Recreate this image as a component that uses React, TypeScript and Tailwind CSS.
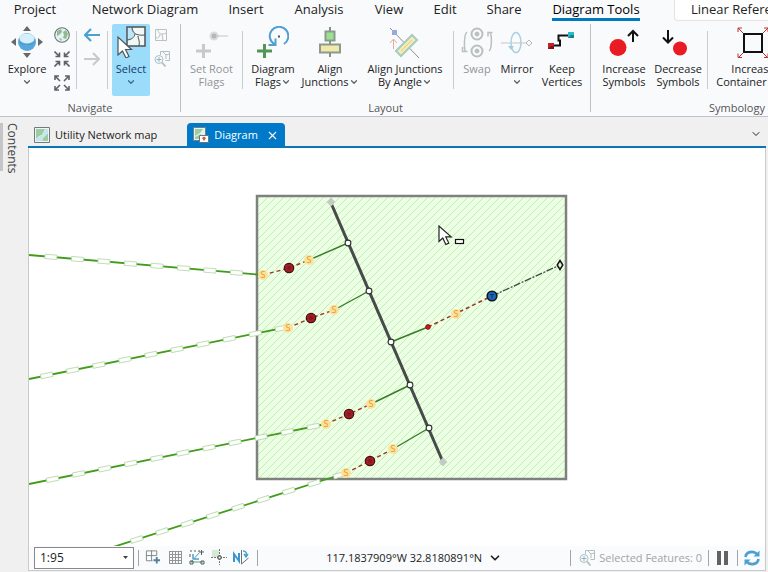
import { ReactNode } from 'react';
import { ChevronDown, X } from 'lucide-react';

const tabs = [
  { label: 'Project', className: 'w-[70px]' },
  { label: 'Network Diagram', className: 'w-[150px]' },
  { label: 'Insert', className: 'w-[52px]' },
  { label: 'Analysis', className: 'w-[94px]' },
  { label: 'View', className: 'w-[46px]' },
  { label: 'Edit', className: 'w-[66px]' },
  { label: 'Share', className: 'w-[52px]' },
];

// Service lines that come in from the left edge of the map
const services = [
  { x1: 0, y1: 107, x2: 234, y2: 127, first: 22 },
  { x1: 0, y1: 231, x2: 259, y2: 179, first: 18 },
  { x1: 0, y1: 336, x2: 297, y2: 276, first: 24 },
  { x1: 81, y1: 400, x2: 317, y2: 325, first: 28 },
];

const laterals = [
  { from: [234, 127], device: [260, 120], to: [280, 112], junction: [319, 95] },
  { from: [259, 180], device: [282, 170], to: [305, 162], junction: [340, 143] },
  { from: [297, 276], device: [320, 266], to: [342, 256], junction: [381, 237] },
  { from: [317, 325], device: [341, 313], to: [364, 301], junction: [400, 280] },
];

export default function App() {
  return (
    <div className="flex min-h-screen flex-col overflow-hidden bg-[#f0f0f0] font-['Open_Sans','Noto_Sans',sans-serif] text-[11px] text-[#222]">
      <Ribbon />
      <div className="flex flex-1">
        <aside className="w-7 shrink-0 pt-1.5">
          <button className="flex h-12 items-center border-l-3 border-[#c4c5c7] pl-px text-xs text-[#444] [writing-mode:vertical-rl]">
            Contents
          </button>
        </aside>
        <main className="mr-0.5 mb-px flex min-w-0 flex-1 flex-col">
          <ViewTabs />
          <div className="flex flex-1 flex-col border border-t-0 border-[#c9cacc] bg-white">
            <div className="flex-1">
              <DiagramMap />
            </div>
            <StatusBar />
          </div>
        </main>
      </div>
    </div>
  );
}

function Ribbon() {
  return (
    <header className="overflow-hidden border-b border-[#c2c3c6] bg-[#f9fafc]">
      <nav className="flex h-[22px] text-[13px] leading-[19px] whitespace-nowrap">
        {tabs.map((tab) => (
          <a key={tab.label} href="#" className={`${tab.className} flex shrink-0 justify-center`}>
            {tab.label}
          </a>
        ))}
        <a href="#" className="ml-[22px] flex h-[21px] w-[88px] shrink-0 justify-center border-b-3 border-[#0079c1] text-black">
          Diagram Tools
        </a>
        <a href="#" className="ml-[34px] h-[21px] shrink-0 rounded-bl border-b border-l border-[#e4e3dc] bg-white pr-8 pl-4">
          Linear Referencing
        </a>
      </nav>
      <div className="flex h-[94px] pt-0.5">
        <Group label="Navigate">
          <Tool className="w-[54px]" lines={['Explore']} menu icon={<ExploreIcon />} />
          <div className="flex w-4 flex-col items-center gap-1.5 pt-[3px]">
            <IconButton label="Full Extent"><GlobeIcon /></IconButton>
            <IconButton label="Fixed Zoom In"><ZoomInIcon /></IconButton>
            <IconButton label="Fixed Zoom Out"><ZoomOutIcon /></IconButton>
          </div>
          <Separator className="mr-[7px] ml-1.5" />
          <div className="flex w-4 flex-col gap-1.5 pt-[3px]">
            <IconButton label="Previous Extent"><ArrowIcon color="#4d9fd3" /></IconButton>
            <IconButton label="Next Extent"><ArrowIcon color="#c9cacb" flip /></IconButton>
          </div>
          <Separator className="mr-1 ml-[7px]" />
          <Tool className="w-[38px] rounded-xs bg-[#9bdcfb] text-[#123c6b]" lines={['Select']} menu icon={<SelectIcon />} />
          <div className="mr-2.5 ml-1 flex w-4 flex-col gap-1.5 pt-[3px]">
            <IconButton label="Attributes"><MapOutlineIcon /></IconButton>
            <IconButton label="Zoom To Selection"><ZoomSelectionIcon /></IconButton>
          </div>
        </Group>
        <GroupLine />
        <Group label="Layout">
          <Tool className="w-[61px]" lines={['Set Root', 'Flags']} disabled icon={<RootFlagIcon />} />
          <Separator />
          <Tool className="w-[60px]" lines={['Diagram', 'Flags']} menu icon={<DiagramFlagsIcon />} />
          <Tool className="w-[54px]" lines={['Align', 'Junctions']} menu icon={<AlignIcon />} />
          <Tool className="w-[96px]" lines={['Align Junctions', 'By Angle']} menu icon={<AlignAngleIcon />} />
          <Separator />
          <Tool className="w-[46px]" lines={['Swap']} disabled icon={<SwapIcon />} />
          <Tool className="w-[34px]" lines={['Mirror']} menu icon={<MirrorIcon />} />
          <Tool className="w-[56px]" lines={['Keep', 'Vertices']} icon={<VerticesIcon />} />
        </Group>
        <GroupLine />
        <Group label="Symbology">
          <Tool className="ml-1 w-[58px]" lines={['Increase', 'Symbols']} icon={<IncreaseIcon />} />
          <Tool className="mr-1 w-[50px]" lines={['Decrease', 'Symbols']} icon={<DecreaseIcon />} />
          <Separator />
          <Tool className="w-[90px]" lines={['Increase', 'Container Size']} icon={<ContainerIcon />} />
          <Tool className="w-[85px]" lines={['Decrease', 'Container Size']} icon={<ContainerIcon />} />
        </Group>
      </div>
    </header>
  );
}

function Group({ label, children }: { label: string; children: ReactNode }) {
  return (
    <section className="shrink-0">
      <div className="flex h-[78px]">{children}</div>
      <h2 className="text-center leading-3 text-[#555]">{label}</h2>
    </section>
  );
}

function GroupLine() {
  return <span className="h-22 w-px shrink-0 bg-[#bfc0c2]" />;
}

function Separator({ className = '' }: { className?: string }) {
  return <span className={`mt-[7px] h-[58px] w-px shrink-0 bg-[#cacbcd] ${className}`} />;
}

interface ToolProps {
  lines: string[];
  icon: ReactNode;
  menu?: boolean;
  disabled?: boolean;
  className?: string;
}

function Tool({ lines, icon, menu, disabled, className = '' }: ToolProps) {
  return (
    <button disabled={disabled} className={`flex h-[72px] shrink-0 flex-col items-center pt-0.5 leading-[13px] whitespace-nowrap disabled:text-[#929497] ${className}`}>
      <span className="mb-1 h-8">{icon}</span>
      <span>{lines[0]}</span>
      <span className="flex h-[13px] items-center">
        {lines[1]}
        {menu && <ChevronDown size={10} strokeWidth={3} className="opacity-70" />}
      </span>
    </button>
  );
}

function IconButton({ label, children }: { label: string; children: ReactNode }) {
  return (
    <button aria-label={label} className="flex h-[18px] w-4 shrink-0">
      {children}
    </button>
  );
}

function ViewTabs() {
  return (
    <div className="flex h-[31px] items-end border-b-2 border-[#0b74b5] pr-1">
      <button className="flex h-[22px] items-center gap-[5px] pr-[30px] pl-1.5">
        <MapIcon />
        Utility Network map
      </button>
      <div className="flex h-[23px] items-center gap-2 rounded-t bg-[#0079c8] px-1.5 pt-px text-white">
        <button className="flex items-center gap-[5px]">
          <DiagramIcon />
          Diagram
        </button>
        <button aria-label="Close Diagram">
          <X size={13} strokeWidth={2} />
        </button>
      </div>
      <button aria-label="Open views" className="mb-1.5 ml-auto">
        <ChevronDown size={12} />
      </button>
    </div>
  );
}

function StatusBar() {
  return (
    <footer className="flex h-6 items-center bg-[#fafbfc] pl-[5px]">
      <div className="relative">
        <select aria-label="Map scale" className="block h-[22px] w-[100px] appearance-none border border-[#88898c] bg-white px-[5px] text-xs">
          <option>1:95</option>
        </select>
        <svg className="pointer-events-none absolute top-2 right-1.5" width="5" height="5" viewBox="0 0 5 5">
          <path d="M0 1h5L2.5 4z" fill="#444" />
        </svg>
      </div>
      <BarLine className="mx-1" />
      <div className="flex items-center gap-1.5 pl-0.5">
        <IconButton label="Constraints"><ConstraintIcon /></IconButton>
        <IconButton label="Grid"><GridIcon /></IconButton>
        <IconButton label="Snapping"><SnapIcon /></IconButton>
        <IconButton label="Infer Constraint"><InferIcon /></IconButton>
        <IconButton label="Ground To Grid"><NorthIcon /></IconButton>
      </div>
      <BarLine className="ml-2" />
      <button className="mx-auto flex items-center gap-1.5 whitespace-nowrap">
        117.1837909°W 32.8180891°N
        <ChevronDown size={14} strokeWidth={3} />
      </button>
      <BarLine className="mr-2" />
      <span className="flex items-center gap-1 whitespace-nowrap text-[#a2a4a7]">
        <ZoomSelectionIcon />
        Selected Features: 0
      </span>
      <BarLine className="mx-1.5" />
      <button aria-label="Pause drawing" className="px-0.5">
        <svg width="12" height="16" viewBox="0 0 12 16">
          <path d="M0 1h4v14H0zM7 1h4v14H7z" fill="#606266" />
        </svg>
      </button>
      <BarLine className="mx-1.5" />
      <button aria-label="Refresh" className="mr-[5px]">
        <svg width="16" height="16" viewBox="0 0 16 16" fill="none" stroke="#4d9fd3" strokeWidth="2.6">
          <path d="M1.500 7C2 2 9 0 13 4M14.500 9C14 14 7 16 3 12" />
          <path d="M15.500 0.500v6H9.500zM0.500 15.500v-6h6z" fill="#4d9fd3" stroke="none" />
        </svg>
      </button>
    </footer>
  );
}

function BarLine({ className = '' }: { className?: string }) {
  return <span className={`h-4 w-px shrink-0 bg-[#a2a4a7] ${className}`} />;
}

function DiagramMap() {
  return (
    <svg viewBox="0 0 736 398" className="block w-full">
      <defs>
        <pattern id="hatch" width="8" height="8" patternUnits="userSpaceOnUse">
          <path d="M-2 2l4-4M0 8l8-8M6 10l4-4" stroke="#c6e3bd" strokeWidth="0.9" />
        </pattern>
      </defs>
      <rect x="228" y="48" width="309" height="283" fill="#ebffe2" />
      <rect x="228" y="48" width="309" height="283" fill="url(#hatch)" stroke="#7f817f" strokeWidth="2.5" />
      {services.map((line) => (
        <ServiceLine key={line.y1} {...line} />
      ))}
      <path d="M302 55l112 259" stroke="#464b49" strokeWidth="3" />
      <path d="M299 54l3-3 3 3-3 3zM411 314l3-3 3 3-3 3z" fill="#c3cbc3" stroke="#c3cbc3" strokeWidth="2" />
      {laterals.map(({ from, device, to, junction }) => (
        <g key={from[1]}>
          <path d={`M${from} L${device} L${to}`} fill="none" stroke="#9b3a20" strokeWidth="1.4" strokeDasharray="4 3" />
          <path d={`M${to} L${junction}`} stroke="#357c22" strokeWidth="1.4" />
          <Switch x={from[0]} y={from[1]} />
          <Switch x={to[0]} y={to[1]} />
          <circle cx={device[0]} cy={device[1]} r="4.7" fill="#a51d22" stroke="#3f1114" strokeWidth="1.2" />
          <circle cx={device[0]} cy={device[1]} r="2" fill="#7f1a1f" />
          <Junction x={junction[0]} y={junction[1]} />
        </g>
      ))}
      <path d="M362 194l37-15" stroke="#357c22" strokeWidth="1.4" />
      <path d="M399 179l64-31" stroke="#9b3a20" strokeWidth="1.6" strokeDasharray="4 3" />
      <path d="M463 148l68-31" stroke="#3d4a40" strokeWidth="1.3" strokeDasharray="7 1.5 2 1.5" />
      <Junction x={362} y={194} />
      <circle cx="399" cy="179" r="2.4" fill="#c8171d" stroke="#7d1215" strokeWidth="0.8" />
      <Switch x={427} y={166} />
      <circle cx="463" cy="148" r="4.8" fill="#1d66bd" stroke="#101820" strokeWidth="1.6" />
      <path d="M461 146.500h4M463 146.500v4" stroke="#123253" />
      <path d="M531 112.500l2.800 4.500-2.800 4.500-2.800-4.500z" fill="#e7f5e0" stroke="#151515" strokeWidth="1.5" />
      <path d="M410 78v15.500l3.800-3.500 3 6.500 3-1.400-3-6.200h5.400z" fill="#fff" stroke="#222" strokeWidth="1.200" />
      <rect x="426.500" y="91.500" width="8" height="4" fill="#fff" stroke="#111" strokeWidth="1.200" />
    </svg>
  );
}

interface ServiceLineProps {
  x1: number;
  y1: number;
  x2: number;
  y2: number;
  first: number;
}

function ServiceLine({ x1, y1, x2, y2, first }: ServiceLineProps) {
  const length = Math.hypot(x2 - x1, y2 - y1);
  const angle = (Math.atan2(y2 - y1, x2 - x1) * 180) / Math.PI;
  const boxes: number[] = [];
  for (let d = first; d < length - 3; d += 26.6) boxes.push(d);

  return (
    <g transform={`translate(${x1} ${y1}) rotate(${angle})`}>
      <path d={`M0 0H${length}`} stroke="#429c1c" strokeWidth="1.8" />
      {boxes.map((d) => (
        <rect key={d} x={d - 6} y="-2.200" width="12" height="4.400" fill="#fdfffc" stroke="#b4d6a8" strokeWidth="0.8" />
      ))}
    </g>
  );
}

function Switch({ x, y }: { x: number; y: number }) {
  return (
    <g>
      <circle cx={x} cy={y} r="5" fill="#fbe29a" />
      <text x={x} y={y + 3} textAnchor="middle" fontSize="9" fill="#e9962f">S</text>
    </g>
  );
}

function Junction({ x, y }: { x: number; y: number }) {
  return <circle cx={x} cy={y} r="2.900" fill="#fff" stroke="#2c332f" strokeWidth="1.100" />;
}

function ExploreIcon() {
  return (
    <svg width="32" height="32" viewBox="0 0 32 32">
      <path d="M12 5l4-5 4 5zM12 27l4 5 4-5zM5 12v8l-5-4zM27 12v8l5-4z" fill="#67696c" />
      <circle cx="16" cy="16" r="9" fill="#58a6da" />
      <ellipse cx="16" cy="12.500" rx="7.500" ry="5" fill="#d6f0fb" />
      <path d="M8 15c3 5 13 5 16 0-1 3-4 4-8 4s-7-1-8-4z" fill="#3d8fc8" />
    </svg>
  );
}

function GlobeIcon() {
  return (
    <svg width="16" height="16" viewBox="0 0 16 16">
      <circle cx="8" cy="8" r="7.300" fill="#e5f2f4" stroke="#6e7275" strokeWidth="1.100" />
      <path d="M3 4l4-2 1 3-3 3-2 1zM9 5l3-2 2 4-2 5-3-1 1-3zM5 11l3 1-1 2z" fill="#8fbb91" />
    </svg>
  );
}

function ZoomInIcon() {
  return (
    <svg width="16" height="16" viewBox="0 0 16 16" fill="none" stroke="#606366" strokeWidth="1.600">
      <path d="M0.500 0.500l5 5M1.500 5.500h4v-4M15.500 0.500l-5 5M14.500 5.500h-4v-4M0.500 15.500l5-5M1.500 10.500h4v4M15.500 15.500l-5-5M14.500 10.500h-4v4" />
    </svg>
  );
}

function ZoomOutIcon() {
  return (
    <svg width="16" height="16" viewBox="0 0 16 16" fill="none" stroke="#606366" strokeWidth="1.600">
      <path d="M1 1l5 5M1 5V1h4M15 1l-5 5M15 5V1h-4M1 15l5-5M1 11v4h4M15 15l-5-5M15 11v4h-4" />
    </svg>
  );
}

function ArrowIcon({ color, flip }: { color: string; flip?: boolean }) {
  return (
    <svg width="16" height="16" viewBox="0 0 16 16" fill="none" stroke={color} strokeWidth="2.200">
      <path d={flip ? 'M0 8h15M9 2l6 6-6 6' : 'M16 8H1M7 2L1 8l6 6'} />
    </svg>
  );
}

function SelectIcon() {
  return (
    <svg width="32" height="32" viewBox="0 0 32 32" stroke="#4e5357">
      <path d="M12 1h18v19H12z" fill="#f2f8f5" strokeWidth="1.500" />
      <path d="M13 2h5l2 7-4 5-3 1z" fill="#bfe5f7" stroke="none" />
      <path d="M17 1c0 6 4 9 13 8M20 8c-1 4-3 5-8 6M23 10c0 3 2 4 1 10" fill="none" />
      <path d="M3 11v18l4.500-4 3.500 7 3-1.500-3.500-7h6z" fill="#fff" strokeWidth="1.200" />
    </svg>
  );
}

function MapOutlineIcon() {
  return (
    <svg width="16" height="16" viewBox="0 0 16 16" fill="none" stroke="#b9c2c0">
      <path d="M1.500 2.500h11v11h-11zM4 3c0 4 4 5 8 3M6 7c0 3-2 4-4 4M8 7l1 6" />
    </svg>
  );
}

function ZoomSelectionIcon() {
  return (
    <svg width="16" height="16" viewBox="0 0 16 16" fill="none" stroke="#b3bfbe">
      <path d="M6.500 4V0.500h9v9h-4M9 1l3 3 3-1M12 4v4" />
      <circle cx="5" cy="8.500" r="4" fill="#f5fafb" />
      <path d="M2.500 8.500h5M5 6v5" stroke="#8fb6c8" />
      <path d="M8 11.500l3.500 4" strokeWidth="1.800" />
    </svg>
  );
}

function RootFlagIcon() {
  return (
    <svg width="32" height="32" viewBox="0 0 32 32" fill="none">
      <path d="M7.500 18v14M0 25h15" stroke="#c8caca" strokeWidth="3" />
      <circle cx="18" cy="10" r="4.500" fill="#d9dcdb" />
      <circle cx="18" cy="10" r="2.500" fill="#b5b8b8" />
      <path d="M20 10h12" stroke="#c2c5c5" />
    </svg>
  );
}

function DiagramFlagsIcon() {
  return (
    <svg width="32" height="32" viewBox="0 0 32 32" fill="none">
      <path d="M7.500 18v14M0 25h15" stroke="#529653" strokeWidth="3" />
      <path d="M27 18A9.300 9.300 0 1 0 18 18.500" stroke="#519fd3" strokeWidth="2" />
      <path d="M18.500 12.500v6.500h-7" stroke="#519fd3" strokeWidth="2" />
      <path d="M21 10.500h2" stroke="#555" strokeWidth="2" />
    </svg>
  );
}

function AlignIcon() {
  return (
    <svg width="32" height="32" viewBox="0 0 32 32">
      <path d="M16 1v30" stroke="#85918b" strokeWidth="2" />
      <path d="M11.500 5.500h9v9h-9z" fill="#9be28f" stroke="#8b998f" strokeWidth="2" />
      <path d="M6 18.500h20v8H6z" fill="#f3e7aa" stroke="#8b998f" strokeWidth="2" />
    </svg>
  );
}

function AlignAngleIcon() {
  return (
    <svg width="32" height="32" viewBox="0 0 32 32">
      <path d="M1 2l30 31" stroke="#84918f" />
      <path d="M3 4h5v5H3z" fill="#98a9dc" />
      <path d="M4.500 23v-9M1 17l3.500-4L8 17" fill="none" stroke="#e2aaa4" />
      <path d="M7 25L23 9l5 5-16 16z" fill="#f6ebb6" stroke="#a7ccc1" strokeWidth="2" />
      <path d="M12 25l11-11" stroke="#e5cd6e" />
    </svg>
  );
}

function SwapIcon() {
  return (
    <svg width="32" height="32" viewBox="0 0 32 32" fill="none" stroke="#b7c1be">
      <circle cx="16" cy="8" r="5.500" strokeWidth="2" />
      <circle cx="16" cy="25" r="5.500" strokeWidth="2" />
      <circle cx="16" cy="8" r="2" fill="#b7c1be" />
      <circle cx="16" cy="25" r="2" fill="#b7c1be" />
      <path d="M6 6C3 8 3 21 4 25M1.500 21v4.500h5M28 25c3-2 3-15 1-19M31.500 6.500h-4.500v4" strokeWidth="1.500" />
    </svg>
  );
}

function MirrorIcon() {
  return (
    <svg width="32" height="32" viewBox="0 0 32 32" fill="none">
      <path d="M0 17h26" stroke="#c9c5c0" />
      <path d="M25 17l3-3 3 3-3 3z" stroke="#b5b9b7" />
      <ellipse cx="15" cy="16.500" rx="5" ry="10" stroke="#a9d3df" strokeWidth="1.500" />
      <path d="M7 20l3 4 3-4z" fill="#9dcee0" />
    </svg>
  );
}

function VerticesIcon() {
  return (
    <svg width="32" height="32" viewBox="0 0 32 32" fill="none">
      <path d="M6 19.500h8v-5H12.500l0-5H26" stroke="#111" strokeWidth="2" />
      <path d="M2 17h6v6H2z" fill="#bd242a" />
      <path d="M5 20h3v3H2z" fill="#7d1317" />
      <path d="M22 6h6v6h-6z" fill="#2db9cc" />
      <path d="M25 9h3v3h-6z" fill="#187f8d" />
    </svg>
  );
}

function IncreaseIcon() {
  return (
    <svg width="32" height="32" viewBox="0 0 32 32" fill="none">
      <circle cx="10" cy="21.500" r="8.500" fill="#e91c24" />
      <path d="M25 16V5M20 10l5-5 5 5" stroke="#111" strokeWidth="2" />
    </svg>
  );
}

function DecreaseIcon() {
  return (
    <svg width="32" height="32" viewBox="0 0 32 32" fill="none">
      <path d="M6 4v12M1 11.500l5 5 5-5" stroke="#111" strokeWidth="2" />
      <circle cx="18" cy="22.500" r="7" fill="#e91c24" />
    </svg>
  );
}

function ContainerIcon() {
  return (
    <svg width="32" height="32" viewBox="0 0 32 32" fill="none">
      <path d="M7 8h18v18H7z" stroke="#111" strokeWidth="2" />
      <path d="M6 7L1 2M1 6V2h4M26 7l5-5M31 6V2h-4M6 27l-5 5M1 27.500v4h4M26 27l5 5M31 27.500v4h-4" stroke="#c33030" />
    </svg>
  );
}

function MapIcon() {
  return (
    <svg width="16" height="16" viewBox="0 0 16 16">
      <path d="M0.500 0.500h15v15H0.500z" fill="#eef6f5" stroke="#737a7d" />
      <path d="M2 2h9L8 8l-3 1-3 3zM14 6v8H8l1-3z" fill="#9ccca1" />
      <path d="M11 2h3v4L9 11l-1 3H2v-2l4-3 3-1z" fill="#c5e4ec" />
    </svg>
  );
}

function DiagramIcon() {
  return (
    <svg width="16" height="16" viewBox="0 0 16 16">
      <path d="M0.500 0.500h12v13H0.500z" fill="#e6f3ea" stroke="#6d7f88" />
      <path d="M2 2h8L7 6 2 9zM2 10l6-3v5H2z" fill="#9ccca1" />
      <path d="M6.500 8.500h9v7h-9z" fill="#fff" stroke="#667783" />
      <path d="M9 11l2-1.500 2 1.500-2 3z" fill="#d05a48" />
    </svg>
  );
}

function ConstraintIcon() {
  return (
    <svg width="17" height="16" viewBox="0 0 17 16" fill="none" stroke="#7d8285">
      <path d="M1.500 1.500h11v5h-11zM7 1v11M1.500 6v6H8" />
      <path d="M12.500 8v7M9 11.500h7" stroke="#53819e" strokeWidth="2" />
    </svg>
  );
}

function GridIcon() {
  return (
    <svg width="16" height="16" viewBox="0 0 16 16" fill="none" stroke="#929699">
      <path d="M2.500 2v13M5.500 2v13M8.500 2v13M11.500 2v13M14.500 2v13M2 2.500h13M2 5.500h13M2 8.500h13M2 11.500h13M2 14.500h13" />
    </svg>
  );
}

function SnapIcon() {
  return (
    <svg width="16" height="16" viewBox="0 0 16 16" fill="none" stroke="#51605c">
      <path d="M1 2h2M5 2h2M9 2h2M1 5v3" />
      <path d="M2 13L10 4M2 13h12" stroke="#55a08b" />
      <path d="M4 10V5M5 10h5" stroke="#4d9fd3" strokeWidth="1.500" />
      <path d="M1 12h3v3H1zM12 12h3v3h-3zM10 3h5M12.500 1v5" />
    </svg>
  );
}

function InferIcon() {
  return (
    <svg width="16" height="16" viewBox="0 0 16 16" fill="none">
      <path d="M1 1h7v7H1z" fill="#d5ead3" />
      <path d="M8.500 0v16M0 8.500h16" stroke="#777" strokeDasharray="2 1" />
      <path d="M7 7h3v3H7z" fill="#fff" stroke="#444" />
    </svg>
  );
}

function NorthIcon() {
  return (
    <svg width="16" height="16" viewBox="0 0 16 16" fill="none">
      <path d="M1 13V5l5 7V4" stroke="#3c94ce" strokeWidth="2" />
      <path d="M8.500 1v14l7-6" stroke="#6b7073" />
      <path d="M10 2c3 0 4 2 3 5M11 5l2 3 2-3" stroke="#4d9fd3" strokeWidth="1.500" />
    </svg>
  );
}
